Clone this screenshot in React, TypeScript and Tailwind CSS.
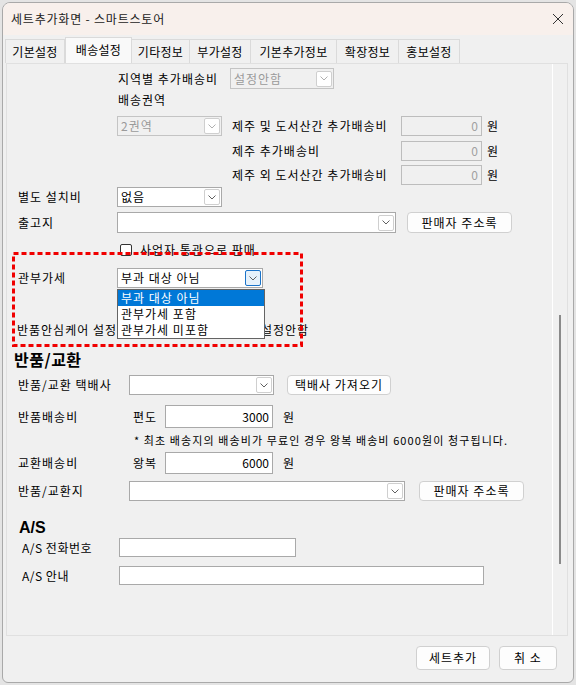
import React from 'react';

const font = "font-['Noto_Sans_CJK_KR','Liberation_Sans',sans-serif]";

function Chevron({ color = '#606060' }: { color?: string }) {
  return (
    <svg width="8" height="5" viewBox="0 0 8 5">
      <path d="M0.5 0.5L4 4L7.5 0.5" fill="none" stroke={color} strokeWidth="1" />
    </svg>
  );
}

function Select({
  w,
  h = 20,
  value = '',
  disabled = false,
  focused = false,
}: {
  w: string;
  h?: number;
  value?: string;
  disabled?: boolean;
  focused?: boolean;
}) {
  return (
    <div
      className={`${w} flex items-center justify-between border ${
        disabled ? 'border-[#c4c4c4] bg-[#f0f0f0] text-[#9a9a9a]' : 'border-[#a9a9a9] bg-white text-black'
      }`}
      style={{ height: h }}
    >
      <span className="pl-[3px] text-[12px] leading-none">{value}</span>
      <div
        className={`mr-[1px] flex h-[16px] w-[16px] items-center justify-center rounded-[2px] border ${
          focused ? 'border-[#1a73c9] bg-[#e5f1fb]' : 'border-[#cfcfcf] bg-white'
        }`}
      >
        <Chevron color={disabled ? '#b0b0b0' : '#606060'} />
      </div>
    </div>
  );
}

function Input({ w, h = 20, value = '', disabled = false }: { w: string; h?: number; value?: string; disabled?: boolean }) {
  return (
    <div
      className={`${w} flex items-center justify-end border pr-[3px] text-[12px] leading-none tracking-normal ${
        disabled ? 'border-[#bdbdbd] bg-[#f0f0f0] text-[#a0a0a0]' : 'border-[#a9a9a9] bg-white text-black'
      }`}
      style={{ height: h }}
    >
      {value}
    </div>
  );
}

function Btn({ w, h = 21, children }: { w: string; h?: number; children: React.ReactNode }) {
  return (
    <div
      className={`${w} flex items-center justify-center rounded-[4px] border border-[#d0d0d0] bg-[#fdfdfd] text-[12px] leading-none text-black`}
      style={{ height: h }}
    >
      {children}
    </div>
  );
}

const tabs = [
  { name: '기본설정', w: 'w-[60px]' },
  { name: '배송설정', w: 'w-[67px]', active: true },
  { name: '기타정보', w: 'w-[59px]' },
  { name: '부가설정', w: 'w-[62px]' },
  { name: '기본추가정보', w: 'w-[87px]' },
  { name: '확장정보', w: 'w-[63px]' },
  { name: '홍보설정', w: 'w-[62px]' },
];

export default function App() {
  return (
    <div className={`relative h-[685px] w-[576px] overflow-hidden bg-[#e4e4e4] p-[2px] ${font} tracking-[1px]`}>
      <div className="flex h-[681px] w-[572px] flex-col overflow-hidden rounded-t-[8px] rounded-b-[6px] border border-[#a9a9a9] bg-[#f0f0f0]">
        {/* title bar */}
        <div className="flex h-[32px] items-center justify-between bg-[#f8f0ec] pl-[8px] pr-[9px]">
          <span className="text-[12px] leading-none tracking-[0.8px] text-[#1b1b1b]">세트추가화면 - 스마트스토어</span>
          <svg width="12" height="12" viewBox="0 0 12 12">
            <path d="M1 1L11 11M11 1L1 11" stroke="#333" strokeWidth="1" />
          </svg>
        </div>

        {/* tabs */}
        <div className="mt-[2px] flex h-[26px] items-end pl-[3px] tracking-[0.3px]">
          {tabs.map((t) => (
            <div
              key={t.name}
              className={`${t.w} flex items-center justify-center border-l border-t border-r border-[#dadada] text-[12px] leading-none ${
                t.active ? '-mb-[1px] h-[27px] bg-[#f9f9f9] pb-[3px]' : '-ml-[1px] h-[24px] bg-[#f0f0f0]'
              }`}
            >
              {t.name}
            </div>
          ))}
        </div>

        {/* panel */}
        <div className="ml-[3px] flex h-[573px] w-[562px] border border-[#e0e0e0] bg-[#f0f0f0]">
          <div className="flex w-[545px] flex-col text-[12px] leading-none text-black">
            <div className="mt-[4px] flex h-[21px] items-center pl-[111px]">
              <span className="w-[112px]">지역별 추가배송비</span>
              <Select w="w-[104px]" h={21} value="설정안함" disabled />
            </div>
            <div className="mt-[3px] flex h-[16px] items-center pl-[111px]">배송권역</div>
            <div className="mt-[8px] flex h-[20px] items-center pl-[110px]">
              <Select w="w-[105px]" value="2권역" disabled />
              <span className="ml-[10px] w-[169px]">제주 및 도서산간 추가배송비</span>
              <Input w="w-[81px]" value="0" disabled />
              <span className="ml-[5px]">원</span>
            </div>
            <div className="mt-[5px] flex h-[20px] items-center pl-[225px]">
              <span className="w-[169px]">제주 추가배송비</span>
              <Input w="w-[81px]" value="0" disabled />
              <span className="ml-[5px]">원</span>
            </div>
            <div className="mt-[4px] flex h-[20px] items-center pl-[225px]">
              <span className="w-[169px]">제주 외 도서산간 추가배송비</span>
              <Input w="w-[81px]" value="0" disabled />
              <span className="ml-[5px]">원</span>
            </div>
            <div className="mt-[2px] flex h-[20px] items-center pl-[11px]">
              <span className="w-[99px]">별도 설치비</span>
              <Select w="w-[105px]" value="없음" />
            </div>
            <div className="mt-[5px] flex h-[21px] items-center pl-[11px]">
              <span className="w-[99px]">출고지</span>
              <Select w="w-[279px]" h={21} />
              <div className="ml-[11px]">
                <Btn w="w-[105px]">판매자 주소록</Btn>
              </div>
            </div>
            <div className="mt-[9px] flex h-[16px] items-center pl-[113px]">
              <div className="h-[12px] w-[12px] rounded-[2px] border border-[#333] bg-white" />
              <span className="ml-[8px]">사업자 통관으로 판매</span>
            </div>
            <div className="mt-[10px] flex h-[20px] items-center pl-[11px]">
              <span className="w-[99px]">관부가세</span>
              <div className="relative">
                <Select w="w-[146px]" value="부과 대상 아님" focused />
                <div className="absolute left-0 top-[21px] z-10 w-[148px] border border-[#646464] bg-white">
                  <div className="flex h-[16px] items-center bg-[#0078d7] pl-[3px] text-white">부과 대상 아님</div>
                  <div className="flex h-[16px] items-center pl-[3px]">관부가세 포함</div>
                  <div className="flex h-[16px] items-center pl-[3px]">관부가세 미포함</div>
                </div>
              </div>
            </div>
            <div className="mt-[34px] flex h-[16px] items-center pl-[10px]">
              <span className="w-[169px] whitespace-nowrap">반품안심케어 설정</span>
              <div className="h-[12px] w-[12px] rounded-full border border-[#333] bg-white" />
              <div className="ml-[47px] h-[12px] w-[12px] rounded-full border border-[#333] bg-white" />
              <span className="ml-[4px]">설정안함</span>
            </div>

            <div className="mt-[12px] flex h-[18px] items-center pl-[7px] text-[16px] font-bold tracking-[0.5px]">반품/교환</div>
            <div className="mt-[7px] flex h-[20px] items-center pl-[11px]">
              <span className="w-[111px]">반품/교환 택배사</span>
              <Select w="w-[145px]" />
              <div className="ml-[13px]">
                <Btn w="w-[104px]" h={20}>택배사 가져오기</Btn>
              </div>
            </div>
            <div className="mt-[10px] flex h-[23px] items-center pl-[11px]">
              <span className="w-[115px]">반품배송비</span>
              <span className="w-[32px]">편도</span>
              <Input w="w-[108px]" h={23} value="3000" />
              <span className="ml-[10px]">원</span>
            </div>
            <div className="mt-[6px] flex h-[12px] items-center pl-[127px] text-[11px] tracking-[1.1px]">
              * 최초 배송지의 배송비가 무료인 경우 왕복 배송비 6000원이 청구됩니다.
            </div>
            <div className="mt-[6px] flex h-[22px] items-center pl-[11px]">
              <span className="w-[115px]">교환배송비</span>
              <span className="w-[32px]">왕복</span>
              <Input w="w-[108px]" h={22} value="6000" />
              <span className="ml-[10px]">원</span>
            </div>
            <div className="mt-[7px] flex h-[20px] items-center pl-[11px]">
              <span className="w-[111px]">반품/교환지</span>
              <Select w="w-[276px]" />
              <div className="ml-[14px]">
                <Btn w="w-[105px]" h={20}>판매자 주소록</Btn>
              </div>
            </div>

            <div className="mt-[18px] flex h-[18px] items-center pl-[12px] font-['Liberation_Sans',sans-serif] text-[16px] font-bold tracking-normal">A/S</div>
            <div className="mt-[1px] flex h-[19px] items-center pl-[15px] tracking-[0.5px]">
              <span className="w-[97px]">A/S 전화번호</span>
              <Input w="w-[177px]" h={19} />
            </div>
            <div className="mt-[9px] flex h-[19px] items-center pl-[15px] tracking-[0.5px]">
              <span className="w-[97px]">A/S 안내</span>
              <Input w="w-[365px]" h={19} />
            </div>
          </div>
          <div className="w-[1px] bg-white" />
          <div className="flex flex-1 justify-center pt-[251px]">
            <div className="h-[249px] w-[2px] bg-[#8a8a8a]" />
          </div>
        </div>

        {/* bottom buttons */}
        <div className="mt-[10px] flex justify-end gap-[9px] pr-[16px]">
          <Btn w="w-[74px]" h={24}>세트추가</Btn>
          <Btn w="w-[58px]" h={24}>취 소</Btn>
        </div>
      </div>

      {/* red dashed annotation */}
      <svg className="absolute left-[12px] top-[252px]" width="291" height="95" viewBox="0 0 291 95">
        <rect x="1.5" y="1.5" width="288" height="92" fill="none" stroke="#f00000" strokeWidth="3" strokeDasharray="5 3" />
      </svg>
    </div>
  );
}
